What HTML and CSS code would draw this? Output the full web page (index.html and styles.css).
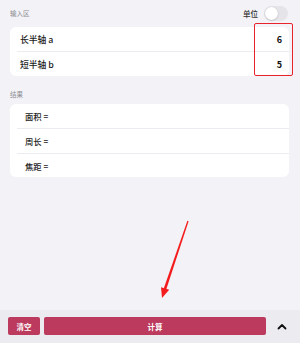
FILE: index.html
```html
<!DOCTYPE html>
<html lang="zh">
<head>
<meta charset="utf-8">
<link rel="stylesheet" href="styles.css">
</head>
<body>
<div class="page">
  <div class="content">
    <div class="head">
      <span class="label">输入区</span>
      <div class="unit">
        <span class="unit-text">单位</span>
        <span class="toggle"><span class="knob"></span></span>
      </div>
    </div>
    <div class="card">
      <div class="row in-row"><span>长半轴 a</span><span class="val">6</span></div>
      <div class="sep"></div>
      <div class="row in-row"><span>短半轴 b</span><span class="val">5</span></div>
    </div>
    <div class="head head-res">
      <span class="label">结果</span>
    </div>
    <div class="card">
      <div class="row res-row">面积 =</div>
      <div class="sep"></div>
      <div class="row res-row">周长 =</div>
      <div class="sep"></div>
      <div class="row res-row last">焦距 =</div>
    </div>
  </div>
  <div class="bar">
    <button class="btn btn-clear">清空</button>
    <button class="btn btn-calc">计算</button>
    <span class="chev">
      <svg width="10" height="7" viewBox="0 0 10 7"><polyline points="1.5,5.5 5,2 8.5,5.5" fill="none" stroke="#111" stroke-width="1.8" stroke-linecap="round" stroke-linejoin="round"/></svg>
    </span>
  </div>
  <div class="redbox"></div>
  <svg class="arrow" width="300" height="343" viewBox="0 0 300 343">
    <polygon points="188.6,221.2 187.4,220.8 163.2,290.0 165.8,290.8" fill="#f41c1c"/>
    <polygon points="162,298 161,287.2 169.2,289.8" fill="#f41c1c"/>
  </svg>
</div>
</body>
</html>
```
FILE: styles.css
```css
* { box-sizing: border-box; }
html, body { margin: 0; padding: 0; }
body {
  background: #f2f2f7;
  font-family: "Noto Sans CJK SC", "Noto Sans", sans-serif;
  color: #1c1c1e;
}
.page {
  position: relative;
  width: 300px;
  height: 343px;
  display: flex;
  flex-direction: column;
  background: #f2f2f7;
  overflow: hidden;
}
.content {
  flex: 1;
  padding: 0 11px 0 10px;
}
.head {
  height: 27px;
  display: flex;
  align-items: center;
  justify-content: space-between;
}
.head-res {
  height: 28px;
  align-items: flex-end;
  padding-bottom: 5px;
}
.label {
  font-size: 6.5px;
  color: #8e8e93;
  line-height: 9px;
}
.unit {
  display: flex;
  align-items: center;
  gap: 6px;
  margin-right: 1px;
}
.unit-text {
  font-size: 7.5px;
  font-weight: 500;
  color: #333;
}
.toggle {
  width: 24px;
  height: 15px;
  border-radius: 8px;
  background: #e4e4e9;
  display: flex;
  align-items: center;
  padding: 1px;
}
.knob {
  width: 13px;
  height: 13px;
  border-radius: 50%;
  background: #fff;
  box-shadow: 0 0.5px 1.5px rgba(0,0,0,0.25);
}
.card {
  background: #fff;
  border-radius: 6px;
}
.row {
  height: 24px;
  display: flex;
  align-items: center;
}
.in-row {
  justify-content: space-between;
  padding: 0 7px 0 10px;
  font-size: 8.8px;
  font-weight: 500;
  color: #222;
}
.val {
  font-weight: 700;
  font-size: 9px;
  color: #111;
}
.res-row {
  padding-left: 15px;
  font-size: 8.3px;
  font-weight: 500;
  color: #222;
}
.res-row.last { height: 23px; }
.sep {
  height: 1px;
  margin-left: 7px;
  background: #ececf0;
}
.bar {
  height: 33px;
  background: #ebebf0;
  display: flex;
  align-items: center;
  padding: 0 0 1px 8px;
}
.btn {
  height: 18px;
  border: none;
  border-radius: 2px;
  background: #bb3a5d;
  color: #fff;
  font-family: "Noto Sans CJK SC", "Noto Sans", sans-serif;
  font-size: 7.5px;
  font-weight: 700;
  padding: 0;
}
.btn-clear { width: 32px; }
.btn-calc { width: 222px; margin-left: 4px; }
.chev {
  flex: 1;
  display: flex;
  justify-content: center;
  align-items: center;
  padding-right: 2px;
}
.chev svg { display: block; }
.redbox {
  position: absolute;
  left: 254px;
  top: 23px;
  width: 39px;
  height: 53px;
  border: 1.8px solid #e8232b;
  border-radius: 2px;
}
.arrow {
  position: absolute;
  left: 0;
  top: 0;
  pointer-events: none;
}
```
